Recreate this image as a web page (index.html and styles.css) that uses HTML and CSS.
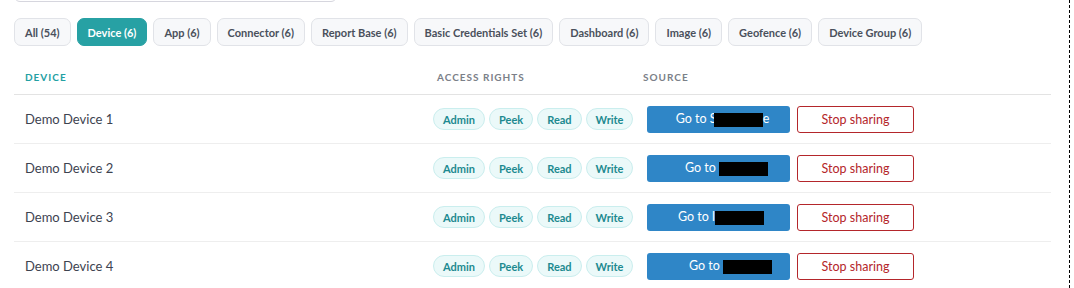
FILE: index.html
```html
<!DOCTYPE html>
<html lang="en">
<head>
    <meta charset="UTF-8">
    <title>Shared resources</title>
    <link rel="stylesheet" href="styles.css">
</head>
<body>
    <div class="page">
        <div class="search-box"></div>

        <!-- type filter -->
        <div class="tabs">
            <button class="tab">All (54)</button>
            <button class="tab active">Device (6)</button>
            <button class="tab">App (6)</button>
            <button class="tab">Connector (6)</button>
            <button class="tab">Report Base (6)</button>
            <button class="tab">Basic Credentials Set (6)</button>
            <button class="tab">Dashboard (6)</button>
            <button class="tab">Image (6)</button>
            <button class="tab">Geofence (6)</button>
            <button class="tab">Device Group (6)</button>
        </div>

        <div class="table">
            <div class="table-head">
                <div class="th th-main">Device</div>
                <div class="th">Access rights</div>
                <div class="th">Source</div>
            </div>

            <div class="row">
                <div class="name">Demo Device 1</div>
                <div class="rights">
                    <span class="badge">Admin</span>
                    <span class="badge">Peek</span>
                    <span class="badge">Read</span>
                    <span class="badge">Write</span>
                </div>
                <div class="actions">
                    <button class="goto-button"><span class="lead lead-xs"></span>Go to S<span class="hidden-name cover"></span>e</button>
                    <button class="stop-button">Stop sharing</button>
                </div>
            </div>

            <div class="row">
                <div class="name">Demo Device 2</div>
                <div class="rights">
                    <span class="badge">Admin</span>
                    <span class="badge">Peek</span>
                    <span class="badge">Read</span>
                    <span class="badge">Write</span>
                </div>
                <div class="actions">
                    <button class="goto-button"><span class="lead lead-m"></span>Go to <span class="hidden-name"></span></button>
                    <button class="stop-button">Stop sharing</button>
                </div>
            </div>

            <div class="row">
                <div class="name">Demo Device 3</div>
                <div class="rights">
                    <span class="badge">Admin</span>
                    <span class="badge">Peek</span>
                    <span class="badge">Read</span>
                    <span class="badge">Write</span>
                </div>
                <div class="actions">
                    <button class="goto-button"><span class="lead lead-s"></span>Go to l<span class="hidden-name"></span></button>
                    <button class="stop-button">Stop sharing</button>
                </div>
            </div>

            <div class="row">
                <div class="name">Demo Device 4</div>
                <div class="rights">
                    <span class="badge">Admin</span>
                    <span class="badge">Peek</span>
                    <span class="badge">Read</span>
                    <span class="badge">Write</span>
                </div>
                <div class="actions">
                    <button class="goto-button"><span class="lead lead-l"></span>Go to <span class="hidden-name"></span></button>
                    <button class="stop-button">Stop sharing</button>
                </div>
            </div>
        </div>
    </div>
</body>
</html>
```

FILE: styles.css
```css
body {
    margin: 0;
    padding: 0;
    background-color: #fff;
    color: #3d4350;
    font-family: Lato, "Liberation Sans", sans-serif;
    overflow: hidden;
}
.page {
    display: flow-root;
    width: 1070px;
    height: 100vh;
    padding: 0 18px 0 14px;
    box-sizing: border-box;
    border-right: 1px dashed #000;
}
.search-box {
    width: 323px;
    height: 34px;
    margin-top: -32px;
    box-sizing: border-box;
    border: 1px solid #d6d6de;
    border-radius: 6px;
}
.tabs {
    display: flex;
    gap: 6px;
    margin-top: 16px;
}
.tab {
    height: 28px;
    padding: 0 10px;
    background-color: #f7f8fa;
    color: #4a505c;
    border: 1px solid #e1e3e8;
    border-radius: 7px;
    font-family: inherit;
    font-size: 11px;
    font-weight: bold;
    cursor: pointer;
}
.tab.active {
    background-color: #27a1a4;
    border-color: #27a1a4;
    color: #fff;
}
.table {
    margin-top: 14px;
}
.table-head {
    display: grid;
    grid-template-columns: 412px 206px 1fr;
    align-items: center;
    height: 34px;
    padding-left: 11px;
    border-bottom: 1px solid #e3e3e3;
}
.th {
    font-size: 10px;
    font-weight: bold;
    letter-spacing: 1px;
    text-transform: uppercase;
    color: #7b8088;
}
.th-main {
    color: #23a0a3;
}
.row {
    display: grid;
    grid-template-columns: 408px 214px 1fr;
    align-items: center;
    height: 48px;
    padding-left: 11px;
    border-bottom: 1px solid #eeeeee;
}
.row:last-child {
    border-bottom: none;
}
.name {
    font-size: 13px;
}
.rights {
    display: flex;
    gap: 4px;
}
.badge {
    display: inline-flex;
    align-items: center;
    height: 20px;
    padding: 0 9px;
    background-color: #ebf9f9;
    border: 1px solid #caeeee;
    border-radius: 11px;
    color: #1d8a90;
    font-size: 11px;
    font-weight: bold;
}
.actions {
    display: flex;
    gap: 7px;
}
.goto-button {
    width: 143px;
    height: 27px;
    padding: 0;
    background-color: #2f86c7;
    color: #fff;
    border: none;
    border-radius: 3px;
    font-family: inherit;
    font-size: 12.5px;
    cursor: pointer;
}
/* redacted resource name */
.hidden-name {
    display: inline-block;
    width: 49px;
    height: 14px;
    background-color: #000;
    vertical-align: middle;
}
.hidden-name.cover {
    margin-left: -3px;
}
.lead {
    display: inline-block;
}
.lead-xs {
    width: 8px;
}
.lead-s {
    width: 5px;
}
.lead-m {
    width: 16px;
}
.lead-l {
    width: 24px;
}
.stop-button {
    width: 117px;
    height: 27px;
    background-color: #fff;
    color: #b4262b;
    border: 1px solid #b4262b;
    border-radius: 3px;
    font-family: inherit;
    font-size: 12.5px;
    cursor: pointer;
}
```
